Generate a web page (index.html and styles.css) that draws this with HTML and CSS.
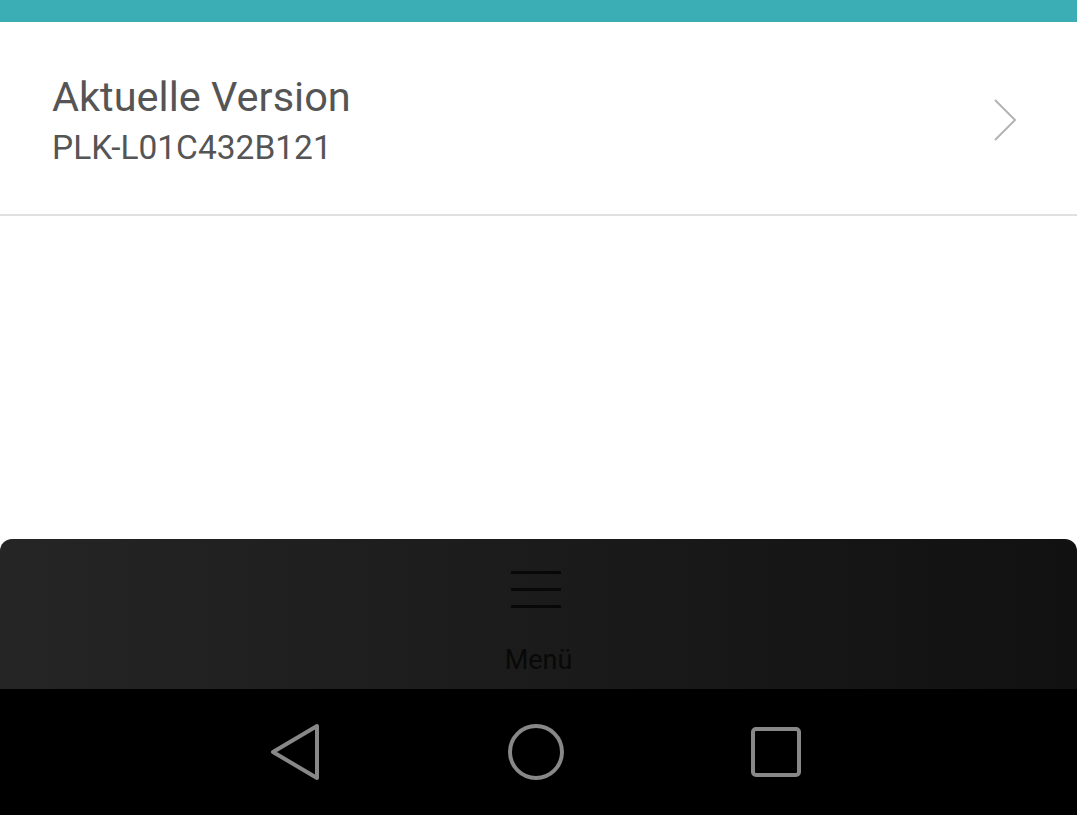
FILE: index.html
```html
<!DOCTYPE html>
<html lang="de">
<head>
  <meta charset="UTF-8">
  <meta name="viewport" content="width=device-width, initial-scale=1.0">
  <title>Software-Update</title>
  <link rel="stylesheet" href="styles.css">
</head>
<body>
  <div class="screen">
    <div class="status-bar"></div>

    <div class="version-row">
      <div class="version-text">
        <div class="version-title">Aktuelle Version</div>
        <div class="version-number">PLK-L01C432B121</div>
      </div>
      <svg class="chevron" width="26" height="44" viewBox="0 0 26 44">
        <polyline points="2,2 22,22 2,42" fill="none" stroke="#b4b4b4" stroke-width="2"/>
      </svg>
    </div>

    <div class="spacer"></div>

    <div class="menu-panel">
      <div class="menu-icon">
        <span></span>
        <span></span>
        <span></span>
      </div>
      <div class="menu-label">Menü</div>
    </div>

    <div class="nav-bar">
      <svg class="nav-btn" width="52" height="58" viewBox="0 0 52 58">
        <path d="M47 3 L47 55 L3 29 Z" fill="none" stroke="#888" stroke-width="4" stroke-linejoin="round"/>
      </svg>
      <svg class="nav-btn" width="58" height="58" viewBox="0 0 58 58">
        <circle cx="29" cy="29" r="26" fill="none" stroke="#888" stroke-width="4"/>
      </svg>
      <svg class="nav-btn" width="52" height="52" viewBox="0 0 52 52">
        <rect x="3" y="3" width="46" height="46" rx="3" fill="none" stroke="#888" stroke-width="4"/>
      </svg>
    </div>
  </div>
</body>
</html>
```

FILE: styles.css
```css
body {
  margin: 0;
  font-family: Roboto, "Noto Sans", sans-serif;
  background-color: #fff;
}

.screen {
  width: 1077px;
  height: 815px;
  display: flex;
  flex-direction: column;
  overflow: hidden;
}

.status-bar {
  height: 22px;
  background-color: #3aaeb4;
}

.version-row {
  height: 192px;
  display: flex;
  align-items: center;
  justify-content: space-between;
  padding: 0 58px 0 52px;
  border-bottom: 2px solid #e0e0e0;
}

.version-text {
  margin-top: 5px;
}

.version-title {
  font-size: 41.5px;
  color: #555;
  line-height: 48px;
}

.version-number {
  font-size: 33.5px;
  color: #555;
  line-height: 40px;
  margin-top: 7px;
}

.chevron {
  margin-top: 4px;
}

.spacer {
  flex: 1;
}

.menu-panel {
  height: 150px;
  border-radius: 12px 12px 0 0;
  background: linear-gradient(90deg, #252525 0%, #1b1b1b 50%, #111 100%);
  display: flex;
  flex-direction: column;
  align-items: center;
}

.menu-icon {
  margin-top: 32px;
  margin-right: 5px;
  display: flex;
  flex-direction: column;
  gap: 14px;
}

.menu-icon span {
  display: block;
  width: 50px;
  height: 3px;
  background-color: #080808;
}

.menu-label {
  margin-top: 36px;
  font-size: 27px;
  color: #090909;
  line-height: 32px;
}

.nav-bar {
  height: 126px;
  background-color: #000;
  display: flex;
  justify-content: center;
  align-items: center;
  gap: 185px;
  padding-right: 5px;
}
```
